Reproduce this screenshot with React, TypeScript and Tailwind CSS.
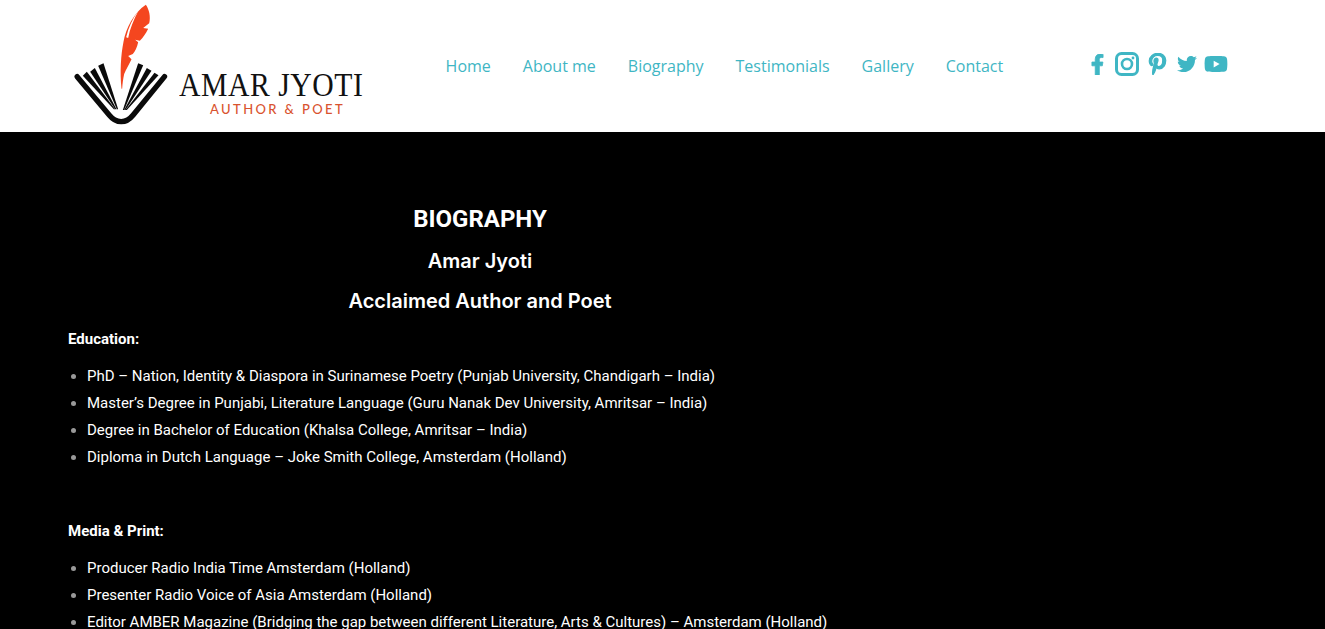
import { FaFacebookF, FaPinterestP, FaTwitter, FaYoutube } from "react-icons/fa";

const nav = ["Home", "About me", "Biography", "Testimonials", "Gallery", "Contact"];
const education = [
  "PhD – Nation, Identity & Diaspora in Surinamese Poetry (Punjab University, Chandigarh – India)",
  "Master’s Degree in Punjabi, Literature Language (Guru Nanak Dev University, Amritsar – India)",
  "Degree in Bachelor of Education (Khalsa College, Amritsar – India)",
  "Diploma in Dutch Language – Joke Smith College, Amsterdam (Holland)",
];
const media = [
  "Producer Radio India Time Amsterdam (Holland)",
  "Presenter Radio Voice of Asia Amsterdam (Holland)",
  "Editor AMBER Magazine (Bridging the gap between different Literature, Arts & Cultures) – Amsterdam (Holland)",
];

function Logo() {
  return (
    <svg viewBox="40 0 290 396" className="w-[97px] h-[132px] shrink-0">
      <path
        d="M185 266 C180 215 183 165 191 125 C198 85 222 38 258 14 C268 28 273 50 268 70 L250 84 L265 86 C258 100 250 112 240 122 L226 119 L235 127 C232 142 226 154 219 162 L205 168 L215 178 C209 192 199 208 193 222 C190 236 188 250 187 266 Z"
        fill="#f4461f"
      />
      <path d="M199 112 C206 82 218 55 236 32 C222 58 210 86 205 114 Z" fill="#ffffff" />
      <path
        d="M52 230 L148 345 Q164 365 184 365 Q204 365 220 345 L314 230"
        fill="none"
        stroke="#0a0a0a"
        strokeWidth="16"
        strokeLinecap="round"
        strokeLinejoin="round"
      />
      <g fill="#0a0a0a">
        <polygon points="69,227 81,215 166,328 162,328" />
        <polygon points="91,215 105,204 170,328 166,328" />
        <polygon points="115,197 131,190 175,328 171,328" />
        <polygon points="235,190 250,196 193,330 189,330" />
        <polygon points="261,204 275,212 197,330 193,330" />
        <polygon points="284,218 296,226 201,330 197,330" />
      </g>
    </svg>
  );
}

function Instagram() {
  return (
    <svg viewBox="0 0 24 24" className="w-[24px] h-[24px]" fill="none" stroke="currentColor">
      <rect x="1.5" y="1.5" width="21" height="21" rx="5" strokeWidth="3" />
      <circle cx="12" cy="12" r="5" strokeWidth="2.6" />
      <circle cx="18" cy="6" r="1.4" fill="currentColor" stroke="none" />
    </svg>
  );
}

function List({ items }: { items: string[] }) {
  return (
    <ul className="mt-[13px] pl-[19px] list-disc marker:text-[#999999]">
      {items.map((t) => (
        <li key={t} className="h-[27px] leading-[27px]">
          {t}
        </li>
      ))}
    </ul>
  );
}

export default function App() {
  return (
    <div className="h-screen overflow-hidden bg-black font-['Roboto',sans-serif]">
      <header className="h-[132px] bg-white flex pl-[73px]">
        <Logo />
        <div className="ml-[9px] mt-[68px] w-[190px] shrink-0">
          <div className="font-['Liberation_Serif',serif] text-[#111111] text-[33px] leading-[34px] tracking-[0.6px] whitespace-nowrap scale-x-90 origin-left">
            AMAR JYOTI
          </div>
          <div className="font-['Lato',sans-serif] font-medium text-[#d9532f] text-[13px] leading-[14px] tracking-[2.4px] pl-[31px] whitespace-nowrap">
            AUTHOR &amp; POET
          </div>
        </div>
        <nav className="ml-[76.6px] flex items-center gap-[32px] font-['Open_Sans',sans-serif] text-[16px] text-[#3fb6c4]">
          {nav.map((n) => (
            <span key={n}>{n}</span>
          ))}
        </nav>
        <div className="ml-[87px] h-[128px] flex items-center text-[#3fb6c4]">
          <FaFacebookF className="w-[13px] h-[21px] ml-[1px]" strokeWidth={20} />
          <span className="ml-[11px]">
            <Instagram />
          </span>
          <FaPinterestP className="ml-[9px] w-[19px] h-[22px]" strokeWidth={28} />
          <FaTwitter className="ml-[9px] w-[22px] h-[20px]" />
          <FaYoutube className="ml-[6px] w-[24px] h-[22px]" />
        </div>
      </header>
      <main className="w-[824px] ml-[68px] text-white text-[15px]">
        <h1 className="mt-[71px] text-center font-bold text-[24px] leading-[32px]">BIOGRAPHY</h1>
        <h2 className="mt-[13px] text-center font-['Inter',sans-serif] font-semibold text-[20px] leading-[26px]">
          Amar Jyoti
        </h2>
        <h2 className="mt-[14px] text-center font-['Inter',sans-serif] font-semibold text-[20px] leading-[26px]">
          Acclaimed Author and Poet
        </h2>
        <p className="mt-[14px] font-bold leading-[22px]">Education:</p>
        <List items={education} />
        <p className="mt-[49px] font-bold leading-[22px]">Media &amp; Print:</p>
        <List items={media} />
      </main>
    </div>
  );
}
